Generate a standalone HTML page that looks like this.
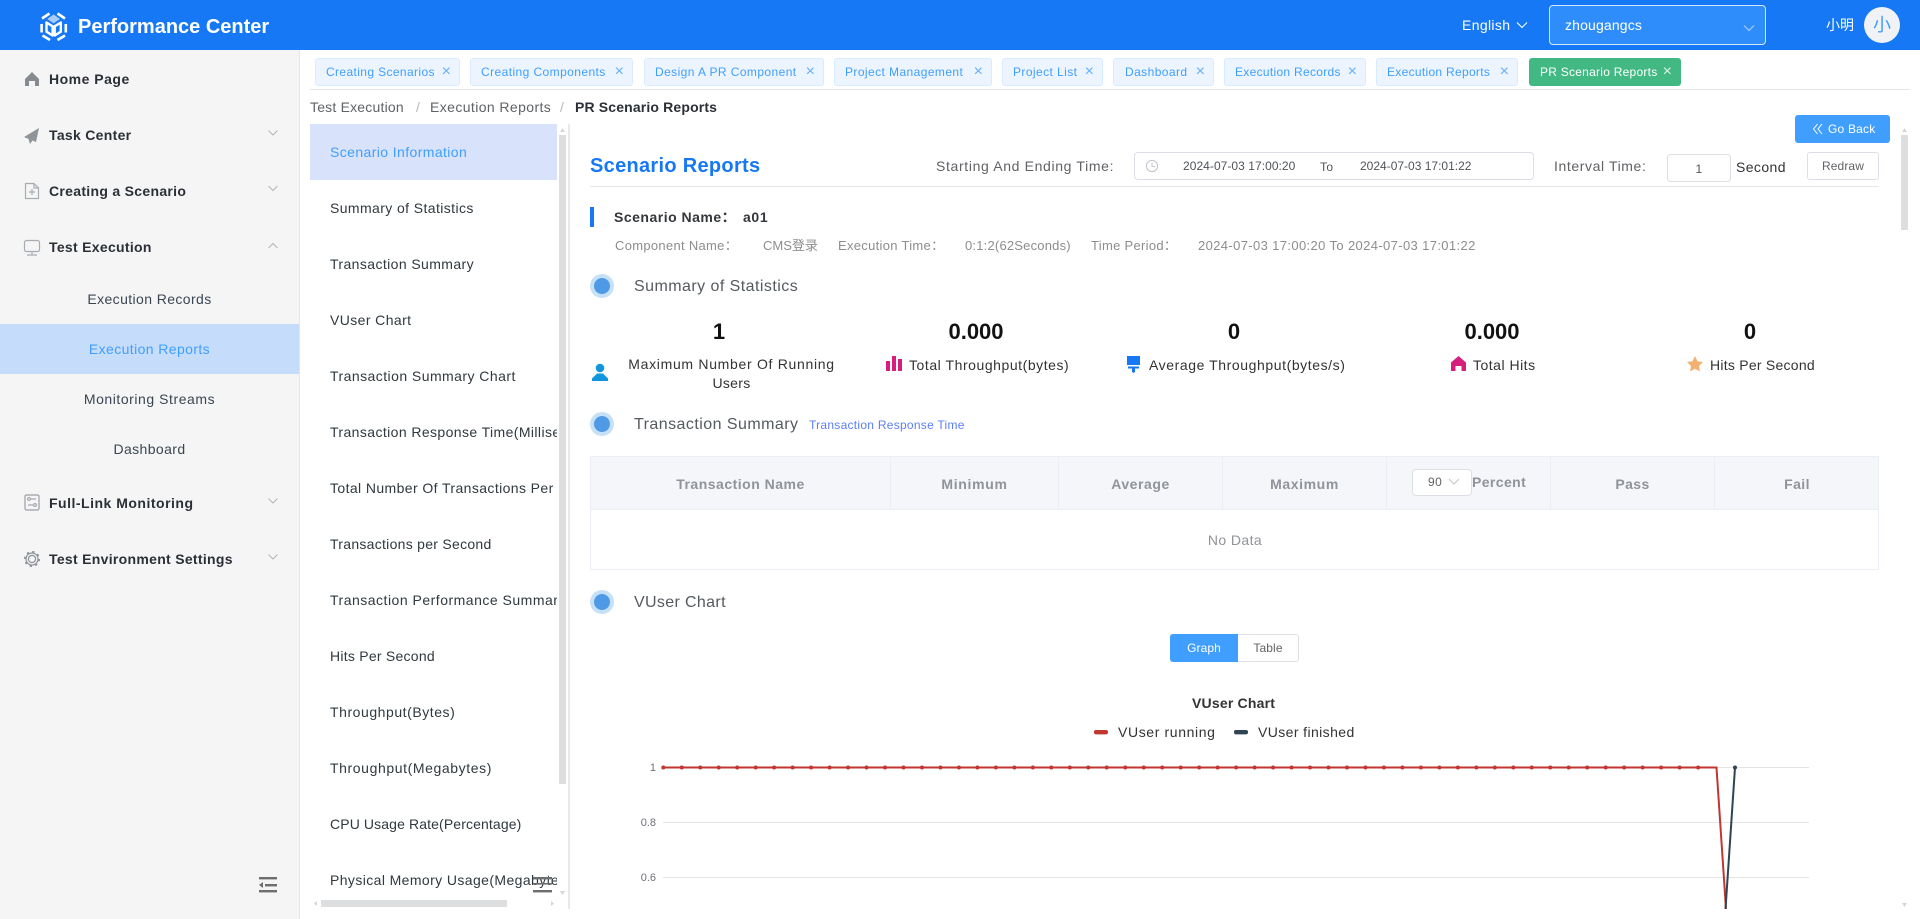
<!DOCTYPE html>
<html lang="en"><head><meta charset="utf-8"><title>Performance Center</title>
<style>
html,body{margin:0;padding:0;width:1920px;height:919px;overflow:hidden;background:#fff}
body{position:relative;font-family:"Liberation Sans","Noto Sans CJK SC",sans-serif;font-size:14px;color:#303133;letter-spacing:.4px}
div,span,svg{position:absolute;box-sizing:border-box;white-space:nowrap}
.hdr{left:0;top:0;width:1920px;height:50px;background:#1678f5}
.side{left:0;top:50px;width:300px;height:869px;background:#f5f5f5;border-right:1px solid #e6e6e6}
.m{left:49px;font-weight:bold;color:#2b2f36;line-height:20px;letter-spacing:.3px}
.s{left:0;width:299px;text-align:center;line-height:20px;color:#3b4652}
.tab{top:58px;height:28px;background:#ecf5ff;border:1px solid #d9ecff;border-radius:3px;color:#409eff;font-size:12px;line-height:27px;padding-left:10px;letter-spacing:.42px}
.tab i{position:absolute;right:8px;top:-1px;font-style:normal;font-size:16px;letter-spacing:0;opacity:.8}
.li{left:330px;width:227px;overflow:hidden;line-height:20px;color:#303840}
.g{color:#8d8d8d;font-size:13px;line-height:18px;letter-spacing:.3px}
.sec{color:#555a60;font-size:16px;line-height:22px;letter-spacing:.45px}
.dot{left:590px;width:24px;height:24px;border-radius:50%;background:#c6e0f8}
.dot:after{content:"";position:absolute;left:4px;top:4px;width:16px;height:16px;border-radius:50%;background:#4f9ae6}
.n{font-size:22px;font-weight:bold;color:#111;line-height:24px;width:120px;text-align:center;letter-spacing:0}
.l{line-height:20px;color:#333}
.th{top:474px;font-weight:bold;color:#909399;text-align:center;line-height:20px;letter-spacing:.4px}
.vl{top:457px;width:1px;height:52px;background:#ebeef5}
</style></head><body>

<div class="hdr"></div>
<svg style="left:0;top:0" width="90" height="50" viewBox="0 0 90 50">
<g fill="none" stroke="#fff" stroke-width="2.6">
<path d="M42 18.500 49.500 13.500M57.500 13.500 65 18.500M41.600 24V32.500M65.800 24V32.500M42.500 35.500 50 40M57.500 40 65 35.500"/>
</g>
<path d="M53.600 14.500 60 19 53.600 23.400 47.200 19Z" fill="#a9cdf7"/>
<g fill="none" stroke="#fff" stroke-width="2.400" stroke-linejoin="round">
<path d="M46.500 22.500 52.600 26.300V35.500L46.500 31.700Z"/><path d="M60.800 22.500 54.700 26.300V35.500L60.800 31.700Z"/>
</g>
</svg>
<span style="left:78px;top:15px;color:#fff;font-size:20px;font-weight:bold;line-height:24px;letter-spacing:0">Performance Center</span>
<span style="left:1462px;top:15px;color:#fff;line-height:20px;letter-spacing:.35px">English</span>
<svg style="left:1516px;top:21px" width="12" height="8"><path d="M1 1.500 6 6.500 11 1.500" fill="none" stroke="#fff" stroke-width="1.100"/></svg>
<div style="left:1549px;top:5px;width:217px;height:40px;background:#2f8dfb;border:1px solid #d6e7fb;border-radius:4px"></div>
<span style="left:1565px;top:15px;color:#fff;line-height:20px;letter-spacing:.15px">zhougangcs</span>
<svg style="left:1743px;top:24px" width="12" height="8"><path d="M1 1.500 6 6.500 11 1.500" fill="none" stroke="#a9cdf7" stroke-width="1.100"/></svg>
<span style="left:1826px;top:15px;color:#fff;font-size:14px;line-height:20px;letter-spacing:0">小明</span>
<div style="left:1864px;top:7px;width:36px;height:36px;border-radius:50%;background:#f0f2f5;color:#409eff;font-size:18px;line-height:36px;text-align:center;letter-spacing:0">小</div>

<div class="side"></div>
<svg style="left:0;top:50px" width="299" height="860" viewBox="0 50 299 860">
<path d="M32 72 39 79V86H35V81H29V86H25V79Z" fill="#868b92"/>
<path d="M39 128 24 137 28.500 139 30 144 32.500 140.500 36 142Z" fill="#8f949b"/>
<g fill="none" stroke="#a7abb3" stroke-width="1.200">
<path d="M25.500 183.500H34L38.500 188V198.500H25.500Z"/><path d="M34 183.500V188H38.500M32 189V195M29 192H35"/>
<rect x="24.500" y="240.500" width="15" height="11" rx="2"/><path d="M32 251.500V254.500M27 255H37"/>
<rect x="25" y="495" width="14" height="15" rx="1.500" stroke="#9a9ea6"/><circle cx="29" cy="499" r="1.400"/><circle cx="35" cy="505" r="1.400"/><path d="M31 499H36M28 505H33"/>
<circle cx="32" cy="559" r="3.600" stroke="#8d9199"/><circle cx="32" cy="559" r="6" stroke="#8d9199"/><circle cx="32" cy="559" r="7.200" stroke="#8d9199" stroke-width="1.600" stroke-dasharray="2.300 3.350"/>
</g>
<g fill="none" stroke="#b5b5b5" stroke-width="1">
<path d="M268.500 130.500 273 135 277.500 130.500"/><path d="M268.500 186 273 190.500 277.500 186"/><path d="M268.500 248 273 243.500 277.500 248"/><path d="M268.500 498.500 273 503 277.500 498.500"/><path d="M268.500 554.500 273 559 277.500 554.500"/>
</g>
<g fill="#6e6e6e"><rect x="259" y="877" width="18" height="2.400"/><rect x="265" y="884" width="12" height="2.400"/><rect x="259" y="890" width="18" height="2.400"/><path d="M259 885 263 882V888Z"/></g>
</svg>
<span class="m" style="top:69px;letter-spacing:.5px">Home Page</span>
<span class="m" style="top:125px">Task Center</span>
<span class="m" style="top:181px">Creating a Scenario</span>
<span class="m" style="top:237px">Test Execution</span>
<div class="s" style="top:289px">Execution Records</div>
<div class="s" style="top:324px;height:50px;line-height:50px;background:#c5ddfb;color:#409eff;width:299px">Execution Reports</div>
<div class="s" style="top:389px;letter-spacing:.55px">Monitoring Streams</div>
<div class="s" style="top:439px">Dashboard</div>
<span class="m" style="top:493px;letter-spacing:.5px">Full-Link Monitoring</span>
<span class="m" style="top:549px">Test Environment Settings</span>

<div class="tab" style="left:315px;width:145px;letter-spacing:.38px">Creating Scenarios<i>×</i></div>
<div class="tab" style="left:470px;width:163px">Creating Components<i>×</i></div>
<div class="tab" style="left:644px;width:180px">Design A PR Component<i>×</i></div>
<div class="tab" style="left:834px;width:158px">Project Management<i>×</i></div>
<div class="tab" style="left:1002px;width:101px">Project List<i>×</i></div>
<div class="tab" style="left:1113px;width:101px;padding-left:11px">Dashboard<i>×</i></div>
<div class="tab" style="left:1224px;width:142px;letter-spacing:.3px">Execution Records<i>×</i></div>
<div class="tab" style="left:1376px;width:142px;letter-spacing:.3px">Execution Reports<i>×</i></div>
<div class="tab" style="left:1529px;width:152px;background:#42b983;border-color:#42b983;color:#fff;letter-spacing:.25px">PR Scenario Reports<i>×</i></div>
<div style="left:310px;top:89px;width:1600px;height:1px;background:#e4e6ea"></div>

<span style="left:310px;top:97px;line-height:20px;color:#5f6266;letter-spacing:.2px">Test Execution</span>
<span style="left:416px;top:97px;line-height:20px;color:#b5b8bd">/</span>
<span style="left:430px;top:97px;line-height:20px;color:#5f6266">Execution Reports</span>
<span style="left:560px;top:97px;line-height:20px;color:#b5b8bd">/</span>
<span style="left:575px;top:97px;line-height:20px;color:#2b2f36;font-weight:bold;letter-spacing:.15px">PR Scenario Reports</span>

<div style="left:310px;top:124px;width:247px;height:56px;background:#d8e3fb"></div>
<div class="li" style="top:142px;color:#409eff">Scenario Information</div>
<div class="li" style="top:198px">Summary of Statistics</div>
<div class="li" style="top:254px">Transaction Summary</div>
<div class="li" style="top:310px">VUser Chart</div>
<div class="li" style="top:366px;letter-spacing:.45px">Transaction Summary Chart</div>
<div class="li" style="top:422px">Transaction Response Time(Milliseconds)</div>
<div class="li" style="top:478px">Total Number Of Transactions Per Second</div>
<div class="li" style="top:534px;letter-spacing:.28px">Transactions per Second</div>
<div class="li" style="top:590px;letter-spacing:.5px">Transaction Performance Summary</div>
<div class="li" style="top:646px;letter-spacing:.25px">Hits Per Second</div>
<div class="li" style="top:702px;letter-spacing:.55px">Throughput(Bytes)</div>
<div class="li" style="top:758px;letter-spacing:.6px">Throughput(Megabytes)</div>
<div class="li" style="top:814px;letter-spacing:.12px">CPU Usage Rate(Percentage)</div>
<div class="li" style="top:870px">Physical Memory Usage(Megabytes)</div>

<svg style="left:0;top:0" width="1920" height="919">
<g fill="#dddee0"><rect x="559" y="135" width="7" height="649"/><rect x="321" y="900" width="186" height="7"/><rect x="1901" y="135" width="7" height="95"/></g>
<g fill="#d5d6d8"><path d="M562.500 128 565 132H560Z"/><path d="M562.500 895 565 891H560Z"/><path d="M314 903.500 317 901V906Z"/><path d="M554 903.500 551 901V906Z"/><path d="M1904.500 128 1907 132H1902Z"/><path d="M1904.500 907 1907 903H1902Z"/></g>
<g fill="#6e6e6e"><rect x="533" y="877" width="19" height="2.400"/><rect x="533" y="883" width="19" height="1.600"/><rect x="533" y="890" width="19" height="2.400"/></g>
<rect x="568" y="124" width="2" height="785" fill="#e8e8e8"/>
</svg>

<div style="left:1795px;top:115px;width:95px;height:28px;background:#409eff;border-radius:3px;color:#fff;font-size:12px;line-height:28px;padding-left:33px;letter-spacing:.2px">Go Back</div>
<svg style="left:1812px;top:122px" width="12" height="14"><path d="M5.500 2 1.500 7 5.500 12M10 2 6 7 10 12" fill="none" stroke="#fff" stroke-width="1"/></svg>

<span style="left:590px;top:154px;color:#1678f5;font-size:20px;font-weight:bold;line-height:24px;letter-spacing:.3px">Scenario Reports</span>
<span style="left:936px;top:156px;line-height:20px;color:#606266;letter-spacing:.65px">Starting And Ending Time:</span>
<div style="left:1134px;top:152px;width:400px;height:28px;border:1px solid #dcdfe6;border-radius:4px"></div>
<svg style="left:1145px;top:159px" width="14" height="14"><circle cx="7" cy="7" r="5.600" fill="none" stroke="#c0c4cc"/><path d="M7 3.500V7.500H10" fill="none" stroke="#c0c4cc"/></svg>
<span style="left:1183px;top:158px;font-size:12px;line-height:16px;color:#505358;letter-spacing:.05px">2024-07-03 17:00:20</span>
<span style="left:1320px;top:159px;font-size:12px;line-height:16px;color:#505358">To</span>
<span style="left:1360px;top:158px;font-size:12px;line-height:16px;color:#505358;letter-spacing:0">2024-07-03 17:01:22</span>
<span style="left:1554px;top:156px;line-height:20px;color:#606266;letter-spacing:.6px">Interval Time:</span>
<div style="left:1667px;top:154px;width:64px;height:28px;border:1px solid #dcdfe6;border-radius:4px;text-align:center;line-height:28px;font-size:12px;color:#505358">1</div>
<span style="left:1736px;top:157px;line-height:20px;color:#333">Second</span>
<div style="left:1807px;top:152px;width:72px;height:28px;border:1px solid #dcdfe6;border-radius:3px;text-align:center;line-height:26px;font-size:12px;color:#606266;letter-spacing:.1px">Redraw</div>
<div style="left:590px;top:186px;width:1289px;height:1px;background:#e4e6ea"></div>

<div style="left:590px;top:207px;width:4px;height:20px;background:#1678f5"></div>
<span style="left:614px;top:207px;font-weight:bold;line-height:20px;color:#33363a;letter-spacing:.5px">Scenario Name：</span>
<span style="left:743px;top:207px;font-weight:bold;line-height:20px;color:#33363a;letter-spacing:.65px">a01</span>
<span class="g" style="left:615px;top:237px">Component Name：</span>
<span class="g" style="left:763px;top:237px;letter-spacing:0">CMS登录</span>
<span class="g" style="left:838px;top:237px">Execution Time：</span>
<span class="g" style="left:965px;top:237px;letter-spacing:.2px">0:1:2(62Seconds)</span>
<span class="g" style="left:1091px;top:237px">Time Period：</span>
<span class="g" style="left:1198px;top:237px;letter-spacing:.37px">2024-07-03 17:00:20 To 2024-07-03 17:01:22</span>

<div class="dot" style="top:274px"></div>
<span class="sec" style="left:634px;top:276px">Summary of Statistics</span>
<div class="n" style="left:659px;top:320px">1</div>
<div class="n" style="left:916px;top:320px">0.000</div>
<div class="n" style="left:1174px;top:320px">0</div>
<div class="n" style="left:1432px;top:320px">0.000</div>
<div class="n" style="left:1690px;top:320px">0</div>

<svg style="left:0;top:0" width="1920" height="400">
<g fill="#1296db"><circle cx="600" cy="368" r="4.300"/><path d="M592 381V378.500L597 373.500H603L608 378.500V381Z"/></g>
<g fill="#d81e7c"><rect x="886" y="361" width="4" height="10"/><rect x="892" y="356" width="4" height="15"/><rect x="898" y="359" width="4" height="12"/></g>
<g fill="#1678f5"><rect x="1127" y="356" width="13" height="9"/><rect x="1128" y="366.500" width="11" height="2"/><path d="M1132 368.500H1135V372L1133.500 373 1132 372Z"/></g>
<path d="M1458.500 356 1466 362.500V371H1461.500V366H1455.500V371H1451V362.500Z" fill="#d81e7c"/>
<path d="M1695 356 1697.500 361.200 1703 362 1699 366 1700 371.500 1695 368.800 1690 371.500 1691 366 1687 362 1692.500 361.200Z" fill="#f3b171"/>
</svg>
<div class="l" style="left:628px;top:354px;width:207px;text-align:center;letter-spacing:.7px">Maximum Number Of Running</div>
<div class="l" style="left:628px;top:373px;width:207px;text-align:center;letter-spacing:.3px">Users</div>
<span class="l" style="left:909px;top:355px;letter-spacing:.55px">Total Throughput(bytes)</span>
<span class="l" style="left:1149px;top:355px;letter-spacing:.58px">Average Throughput(bytes/s)</span>
<span class="l" style="left:1473px;top:355px;letter-spacing:.5px">Total Hits</span>
<span class="l" style="left:1710px;top:355px;letter-spacing:.25px">Hits Per Second</span>

<div class="dot" style="top:412px"></div>
<span class="sec" style="left:634px;top:414px">Transaction Summary</span>
<span style="left:809px;top:417px;font-size:12px;line-height:16px;color:#5b7ff5;letter-spacing:.27px">Transaction Response Time</span>

<div style="left:590px;top:456px;width:1289px;height:114px;border:1px solid #ebeef5"></div>
<div style="left:591px;top:457px;width:1287px;height:53px;background:#f4f6fa;border-bottom:1px solid #ebeef5"></div>
<div class="vl" style="left:890px"></div><div class="vl" style="left:1058px"></div><div class="vl" style="left:1222px"></div><div class="vl" style="left:1386px"></div><div class="vl" style="left:1550px"></div><div class="vl" style="left:1714px"></div>
<div class="th" style="left:591px;width:299px;letter-spacing:.5px">Transaction Name</div>
<div class="th" style="left:891px;width:167px;letter-spacing:.7px">Minimum</div>
<div class="th" style="left:1059px;width:163px;letter-spacing:.55px">Average</div>
<div class="th" style="left:1223px;width:163px;letter-spacing:.6px">Maximum</div>
<div style="left:1412px;top:469px;width:60px;height:27px;background:#fff;border:1px solid #dcdfe6;border-radius:4px;font-size:12px;line-height:25px;padding-left:15px;color:#606266">90</div>
<svg style="left:1448px;top:478px" width="12" height="8"><path d="M1 1 6 6 11 1" fill="none" stroke="#c0c4cc"/></svg>
<span class="th" style="left:1472px;top:472px">Percent</span>
<div class="th" style="left:1551px;width:163px">Pass</div>
<div class="th" style="left:1715px;width:164px">Fail</div>
<div style="left:591px;top:530px;width:1288px;text-align:center;line-height:20px;color:#909399">No Data</div>

<div class="dot" style="top:590px"></div>
<span class="sec" style="left:634px;top:592px;letter-spacing:.35px">VUser Chart</span>

<div style="left:1170px;top:634px;width:68px;height:28px;background:#409eff;border-radius:3px 0 0 3px;color:#fff;font-size:12px;line-height:28px;text-align:center;letter-spacing:.1px">Graph</div>
<div style="left:1238px;top:634px;width:61px;height:28px;border:1px solid #dcdfe6;border-left:0;border-radius:0 3px 3px 0;color:#606266;font-size:12px;line-height:26px;text-align:center;letter-spacing:.1px">Table</div>
<span style="left:1192px;top:693px;font-weight:bold;line-height:20px;color:#333;letter-spacing:.2px">VUser Chart</span>

<svg style="left:0;top:0" width="1920" height="909">
<rect x="1094" y="730" width="14" height="4.400" rx="2" fill="#c23531"/>
<rect x="1234" y="730" width="14" height="4.400" rx="2" fill="#2f4554"/>
<g fill="#e4e4e4"><rect x="663" y="767" width="1146" height="1"/><rect x="663" y="822" width="1146" height="1"/><rect x="663" y="877" width="1146" height="1"/></g>
<path d="M663.300 767.500H1716.500L1726 909" fill="none" stroke="#c23531" stroke-width="2"/>
<path d="M663.300 767.500H1716.500" fill="none" stroke="#c23531" stroke-width="4" stroke-linecap="round" stroke-dasharray="0 18.478"/>
<path d="M1725.500 909 1735 767.500" fill="none" stroke="#2f4554" stroke-width="2"/>
<circle cx="1735" cy="767.500" r="2" fill="#2f4554"/>
<g font-family="Liberation Sans" font-size="11" fill="#6e7079" text-anchor="end" letter-spacing="0"><text x="656" y="771">1</text><text x="656" y="826">0.8</text><text x="656" y="881">0.6</text></g>
</svg>
<span style="left:1118px;top:722px;font-size:14px;line-height:20px;color:#333;letter-spacing:.62px">VUser running</span>
<span style="left:1258px;top:722px;font-size:14px;line-height:20px;color:#333;letter-spacing:.4px">VUser finished</span>
</body></html>
